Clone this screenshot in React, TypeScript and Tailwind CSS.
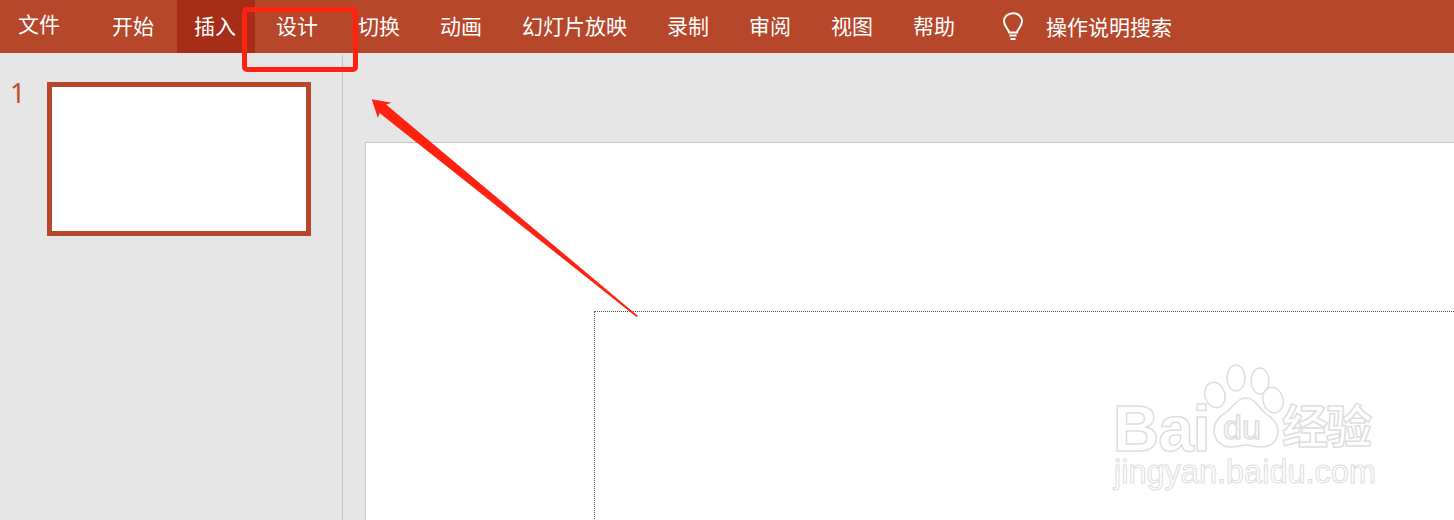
const tabs = ["切换", "动画", "幻灯片放映", "录制", "审阅", "视图", "帮助"];

/** Ribbon tab, 20px either side of the label */
function Tab({ label }: { label: string }) {
  return <div className="px-5 h-full flex items-center pb-[1px]">{label}</div>;
}

function Lightbulb() {
  return (
    <svg width="24" height="30" viewBox="0 0 24 30" fill="none" stroke="white" strokeWidth="2">
      <path d="M8 20.5c0-3-5-5.5-5-11.2C3 4.6 7 1.2 12 1.2s9 3.4 9 8.1c0 5.7-5 8.200-5 11.200z" />
      <path d="M8.500 23.500h7M9.500 27h5" />
    </svg>
  );
}

/** The grey outlined Baidu jingyan watermark */
function Watermark() {
  const outline = "text-white [-webkit-text-stroke:1.5px_#dedede] whitespace-nowrap absolute leading-none";
  return (
    <div className="absolute left-[1110px] top-[360px] w-[270px] h-[135px] font-['Liberation_Sans',sans-serif]">
      <span className={`${outline} left-[3px] top-[41px] text-[64px] !leading-[56px] font-bold tracking-[-1px]`}>Bai</span>
      <svg className="absolute left-[92px] top-[4px]" width="84" height="86" viewBox="0 0 84 86" fill="white" stroke="#dedede" strokeWidth="1.500">
        <ellipse cx="13" cy="31" rx="10" ry="13" transform="rotate(-15 13 31)" />
        <ellipse cx="34" cy="14" rx="9" ry="13" />
        <ellipse cx="58" cy="17" rx="9" ry="13" />
        <ellipse cx="71" cy="36" rx="10" ry="13" transform="rotate(-15 71 36)" />
        <path d="M44 34c-9 0-12 9-21 15-8 5-11 11-11 17 0 11 8 17 17 17 6 0 10-2 15-2s9 2 15 2c11 0 17-7 17-16 0-8-6-13-13-18-7-6-10-15-19-15z" />
      </svg>
      <span className={`${outline} left-[113px] top-[50px] text-[34px]`}>du</span>
      <span className={`${outline} left-[172px] top-[40px] text-[46px] tracking-[-2px] font-bold font-['Noto_Sans_CJK_SC',sans-serif]`}>经验</span>
      <span className={`${outline} left-[4px] top-[98px] text-[32.500px] !leading-[28px] [-webkit-text-stroke:1px_#dedede]`}>jingyan.baidu.com</span>
    </div>
  );
}

export default function App() {
  return (
    <div className="relative w-[1454px] h-[520px] overflow-hidden bg-[#e6e6e6] font-['Noto_Sans_CJK_SC',sans-serif]">
      {/** Ribbon */}
      <div className="flex h-[53px] items-center bg-[#b7472a] text-white text-[21px]">
        <div className="w-[92px] h-full flex items-center pl-[18px] pb-[5px]">文件</div>
        <Tab label="开始" />
        <div className="ml-[3px] mr-[1px] pl-[17px] pr-[19px] h-full flex items-center pb-[1px] bg-[#a62d18]">插入</div>
        <Tab label="设计" />
        {tabs.map((label) => (
          <Tab key={label} label={label} />
        ))}
        <div className="ml-[26px] flex items-center gap-[21px]">
          <Lightbulb />
          <span>操作说明搜索</span>
        </div>
      </div>

      <div className="flex h-[467px]">
        {/** Slide list */}
        <div className="w-[343px] shrink-0 flex items-start border-r border-[#c4c4c4] mt-[2px]">
          <span className="w-[47px] pl-[10px] mt-[20px] text-[27px] leading-[36px] font-normal text-[#c9482a] font-['Noto_Sans',sans-serif]">1</span>
          <div className="w-[264px] h-[154px] mt-[27px] border-[5px] border-[#b7472a] bg-white" />
        </div>

        {/** Slide canvas */}
        <div className="flex-1 pl-[22px] pt-[89px]">
          <div className="w-[1200px] h-[500px] bg-white border border-[#c6c6c6] pl-[228px] pt-[168px]">
            <div className="h-[300px] border border-dotted border-[#555]" />
          </div>
        </div>
      </div>

      <Watermark />

      {/** Red annotation */}
      <div className="absolute left-[242px] top-[7px] w-[116px] h-[65px] rounded-[5px] border-[5px] border-[#ff2211]" />
      <svg className="absolute left-0 top-0" width="1454" height="520" fill="#ff2211">
        <polygon points="371.700,99.300 391.700,102.700 386,104.500 638,316 636.500,317 379.500,113 378,118.300" />
      </svg>
    </div>
  );
}
